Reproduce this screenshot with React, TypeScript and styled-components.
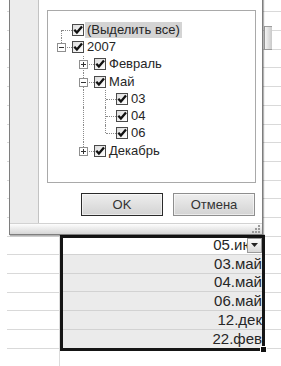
import styled, { createGlobalStyle } from "styled-components";

const ROW = 18.7;

const GlobalStyle = createGlobalStyle`
  html, body {
    margin: 0;
    padding: 0;
    background: #fff;
  }
  body {
    font-family: "Liberation Sans", Arial, sans-serif;
  }
`;

const Page = styled.div`
  position: relative;
  width: 281px;
  height: 366px;
  overflow: hidden;
  background: #fff;
`;

/* ---------- spreadsheet ---------- */

const Sheet = styled.div`
  display: flex;
  padding-left: 7px;
  margin-top: -6.3px;
`;

const Column = styled.div<{ $width?: number }>`
  display: flex;
  flex-direction: column;
  ${(p) => (p.$width ? `width: ${p.$width}px; flex: none;` : "flex: 1;")}
`;

const Cell = styled.div<{ $h?: number; $edge?: boolean }>`
  height: ${(p) => p.$h ?? ROW}px;
  flex: none;
  box-sizing: border-box;
  border-bottom: 1px solid #d9d9d9;
  border-right: ${(p) => (p.$edge ? "1px solid #dcdcdc" : "none")};
`;

const Range = styled.div`
  position: relative;
  height: 116px;
  flex: none;
  box-sizing: border-box;
  border: 3px solid #151515;
  display: flex;
  flex-direction: column;
`;

const RangeCell = styled.div<{ $active?: boolean; $h: number; $last?: boolean }>`
  position: relative;
  height: ${(p) => p.$h}px;
  flex: none;
  box-sizing: border-box;
  background: ${(p) => (p.$active ? "#fff" : "#ebebeb")};
  border-bottom: ${(p) => (p.$last ? "none" : "1px solid #d2d2d2")};
  display: flex;
  align-items: flex-end;
  justify-content: flex-end;
  padding: 0 0 1px 0;
  font-size: 15px;
  line-height: 16px;
  color: #262626;
  white-space: nowrap;
  overflow: hidden;
`;

const FilterButton = styled.div`
  position: absolute;
  right: 0;
  top: 0;
  width: 15px;
  height: 15px;
  box-sizing: border-box;
  border: 1px solid #9a9a9a;
  background: linear-gradient(#fafafa, #d9d9d9);
  display: flex;
  align-items: center;
  justify-content: center;
`;

const FillHandle = styled.div`
  position: absolute;
  right: -5px;
  bottom: -5px;
  width: 5px;
  height: 5px;
  background: #111;
  border: 1px solid #fff;
`;

const SideTab = styled.div`
  position: absolute;
  left: 264px;
  top: 26px;
  width: 8px;
  height: 24px;
  box-sizing: border-box;
  border: 1px solid #9c9c9c;
  border-right: none;
  background: linear-gradient(90deg, #f4f4f4, #c9c9c9);
`;

/* ---------- filter menu ---------- */

const Menu = styled.div`
  position: absolute;
  left: 9px;
  top: -1px;
  width: 254px;
  height: 236px;
  box-sizing: border-box;
  border: 1px solid #7e7e7e;
  background: #fff;
  display: flex;
  flex-direction: column;
  box-shadow: 1px 1px 1px rgba(0, 0, 0, 0.3);
`;

const MenuBody = styled.div`
  flex: 1;
  display: flex;
`;

const IconStrip = styled.div`
  width: 29px;
  flex: none;
  box-sizing: border-box;
  background: #ececec;
  border-right: 1px solid #c3c3c3;
`;

const MenuContent = styled.div`
  flex: 1;
  display: flex;
  flex-direction: column;
  padding: 10px 6px 0 8px;
`;

const TreeBox = styled.div`
  height: 173px;
  box-sizing: border-box;
  border: 1px solid #a9a9a9;
  padding: 10px 0 0 7px;
  display: flex;
  flex-direction: column;
`;

const TreeRow = styled.div`
  height: 17.3px;
  display: flex;
  align-items: center;
`;

const Guide = styled.div<{ $line: boolean }>`
  position: relative;
  width: 22px;
  height: 100%;
  flex: none;
  &::before {
    content: "";
    display: ${(p) => (p.$line ? "block" : "none")};
    position: absolute;
    left: 6px;
    top: 0;
    bottom: 0;
    border-left: 1px dotted #8a8a8a;
  }
`;

const Joint = styled.div<{ $up: boolean; $down: boolean }>`
  position: relative;
  width: 17px;
  height: 100%;
  flex: none;
  &::before {
    content: "";
    position: absolute;
    left: 6px;
    top: ${(p) => (p.$up ? "0" : "50%")};
    bottom: ${(p) => (p.$down ? "0" : "50%")};
    border-left: 1px dotted #8a8a8a;
  }
  &::after {
    content: "";
    position: absolute;
    left: 7px;
    right: 0;
    top: 50%;
    border-top: 1px dotted #8a8a8a;
  }
  svg {
    position: absolute;
    left: 2px;
    top: 50%;
    margin-top: -4px;
    z-index: 1;
  }
`;

const Check = styled.span`
  width: 12px;
  height: 12px;
  flex: none;
  box-sizing: border-box;
  border: 1px solid #4a4a4a;
  background: linear-gradient(135deg, #dcdcdc, #fff);
  display: flex;
  align-items: center;
  justify-content: center;
`;

const Label = styled.span<{ $selected?: boolean }>`
  margin-left: 1px;
  padding: 0 2px;
  font-size: 13px;
  line-height: 16px;
  color: #262626;
  white-space: nowrap;
  background: ${(p) => (p.$selected ? "#d4d4d4" : "transparent")};
`;

const ButtonRow = styled.div`
  margin-top: 10px;
  display: flex;
  justify-content: flex-end;
  gap: 10px;
  padding-right: 1px;
`;

const Button = styled.button<{ $default?: boolean }>`
  width: 82px;
  height: 23px;
  box-sizing: border-box;
  padding: 0;
  border: 1px solid ${(p) => (p.$default ? "#2a2a2a" : "#8e8e8e")};
  background: linear-gradient(#eeeeee, #d3d3d3);
  box-shadow: inset 0 0 0 1px rgba(255, 255, 255, 0.55);
  font-family: "Liberation Sans", Arial, sans-serif;
  font-size: 13px;
  color: #333;
`;

const GripBar = styled.div`
  height: 11px;
  flex: none;
  box-sizing: border-box;
  border-top: 1px solid #d2d2d2;
  background: linear-gradient(#fdfdfd, #d6d6d6);
  display: flex;
  justify-content: flex-end;
  align-items: flex-end;
  padding: 0 2px 1px 0;
`;

/* ---------- drawings ---------- */

const CheckMark = () => (
  <svg width="10" height="10" viewBox="0 0 10 10">
    <path d="M1.3 4.8 L3.9 7.6 L9 1.6" fill="none" stroke="#111" strokeWidth="2.3" />
  </svg>
);

const Expander = ({ open }: { open: boolean }) => (
  <svg width="9" height="9" viewBox="0 0 9 9">
    <rect x="0.5" y="0.5" width="8" height="8" fill="#fff" stroke="#8f8f8f" />
    <path d="M2 4.5 H7" stroke="#333" />
    {!open && <path d="M4.5 2 V7" stroke="#333" />}
  </svg>
);

const Arrow = () => (
  <svg width="7" height="4" viewBox="0 0 7 4">
    <path d="M0 0 H7 L3.5 4 Z" fill="#222" />
  </svg>
);

const Grip = () => (
  <svg width="8" height="8" viewBox="0 0 8 8">
    {[
      [6, 0],
      [6, 3],
      [3, 3],
      [6, 6],
      [3, 6],
      [0, 6],
    ].map(([x, y], i) => (
      <rect key={i} x={x} y={y} width="2" height="2" fill="#9a9a9a" />
    ))}
  </svg>
);

/* ---------- data ---------- */

interface Node {
  label: string;
  guides: boolean[];
  up: boolean;
  down: boolean;
  expander?: "open" | "closed";
  selected?: boolean;
}

const tree: Node[] = [
  { label: "(Выделить все)", guides: [], up: false, down: true, selected: true },
  { label: "2007", guides: [], up: true, down: false, expander: "open" },
  { label: "Февраль", guides: [false], up: true, down: true, expander: "closed" },
  { label: "Май", guides: [false], up: true, down: true, expander: "open" },
  { label: "03", guides: [false, true], up: true, down: true },
  { label: "04", guides: [false, true], up: true, down: true },
  { label: "06", guides: [false, true], up: true, down: false },
  { label: "Декабрь", guides: [false], up: true, down: false, expander: "closed" },
];

const values = ["03.май", "04.май", "06.май", "12.дек", "22.фев"];
const rangeHeights = [ROW, ROW, ROW, ROW, 18];

const cells = (n: number, edge = false) =>
  Array.from({ length: n }, (_, i) => <Cell key={i} $edge={edge} />);

export default function App() {
  return (
    <Page>
      <GlobalStyle />
      <Sheet>
        <Column $width={53}>{cells(21, true)}</Column>
        <Column $width={205}>
          {cells(12)}
          <Cell $h={16.9} />
          <Range>
            <RangeCell $active $h={17.2}>
              05.июн
              <FilterButton>
                <Arrow />
              </FilterButton>
            </RangeCell>
            {values.map((v, i) => (
              <RangeCell key={v} $h={rangeHeights[i]} $last={i === values.length - 1}>
                {v}
              </RangeCell>
            ))}
            <FillHandle />
          </Range>
          {cells(2)}
        </Column>
        <Column>{cells(21)}</Column>
      </Sheet>
      <SideTab />

      <Menu>
        <MenuBody>
          <IconStrip />
          <MenuContent>
            <TreeBox>
              {tree.map((n) => (
                <TreeRow key={n.label}>
                  {n.guides.map((g, i) => (
                    <Guide key={i} $line={g} />
                  ))}
                  <Joint $up={n.up} $down={n.down}>
                    {n.expander && <Expander open={n.expander === "open"} />}
                  </Joint>
                  <Check>
                    <CheckMark />
                  </Check>
                  <Label $selected={n.selected}>{n.label}</Label>
                </TreeRow>
              ))}
            </TreeBox>
            <ButtonRow>
              <Button $default>OK</Button>
              <Button>Отмена</Button>
            </ButtonRow>
          </MenuContent>
        </MenuBody>
        <GripBar>
          <Grip />
        </GripBar>
      </Menu>
    </Page>
  );
}
